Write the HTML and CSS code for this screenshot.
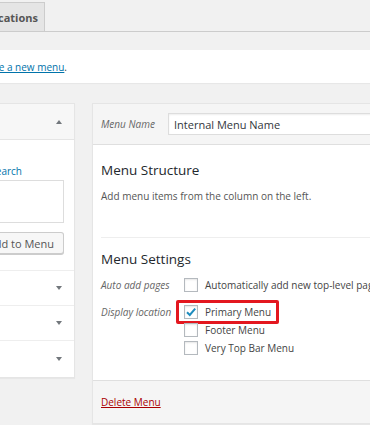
FILE: index.html
```html
<!DOCTYPE html>
<html lang="en">
<head>
<meta charset="utf-8">
<title>Menus</title>
<link rel="stylesheet" href="styles.css">
</head>
<body>
<div class="tabs">
  <div class="tab"><span>Manage Locations</span></div>
</div>

<div class="notice">
  <div class="clip notice-clip"><span>Edit your menu below, or <a href="#">create a new menu</a>.</span></div>
</div>

<div class="columns">
  <div class="side">
    <div class="side-head"><span class="arrow up"></span></div>
    <div class="side-body">
      <div class="clip tab-links"><span>Most Recent | View All | <a href="#" class="plain">Search</a></span></div>
      <div class="listbox"></div>
      <div class="clip btn"><span>Add to Menu</span></div>
    </div>
    <div class="acc"><span class="arrow down"></span></div>
    <div class="acc"><span class="arrow down"></span></div>
    <div class="acc last"><span class="arrow down"></span></div>
  </div>

  <div class="main">
    <div class="main-head">
      <span class="field-label">Menu Name</span>
      <div class="input">Internal Menu Name</div>
    </div>
    <div class="main-body">
      <h3 class="title">Menu Structure</h3>
      <p class="desc">Add menu items from the column on the left.</p>
      <div class="divider"></div>
      <h3 class="title settings-title">Menu Settings</h3>
      <div class="setting">
        <div class="setting-label">Auto add pages</div>
        <div class="opts">
          <div class="opt"><span class="cb"></span>Automatically add new top-level pages to this menu</div>
        </div>
      </div>
      <div class="setting locations">
        <div class="setting-label">Display location</div>
        <div class="opts">
          <div class="opt highlight"><span class="cb checked"><svg viewBox="0 0 14 14" width="14" height="14"><path d="M3 7.2 L5.8 10 L11.2 3.6" fill="none" stroke="#1e8cbe" stroke-width="2"/></svg></span>Primary Menu</div>
          <div class="opt"><span class="cb"></span>Footer Menu</div>
          <div class="opt"><span class="cb"></span>Very Top Bar Menu</div>
        </div>
      </div>
    </div>
    <div class="main-foot"><a href="#" class="delete">Delete Menu</a></div>
  </div>
</div>
</body>
</html>
```

FILE: styles.css
```css
html, body {
  margin: 0;
  padding: 0;
}
body {
  background: #f1f1f1;
  font-family: "Open Sans", "Noto Sans", sans-serif;
  font-size: 10px;
  color: #444;
  overflow: hidden;
  width: 370px;
  height: 425px;
}
a {
  color: #0073aa;
  text-decoration: underline;
}
a.plain {
  text-decoration: none;
}
.clip {
  display: flex;
  justify-content: flex-end;
  overflow: hidden;
  white-space: nowrap;
}

/* top tab */
.tabs {
  padding-top: 2px;
  height: 29px;
  border-bottom: 1px solid #ccc;
  display: flex;
}
.tab {
  width: 45px;
  height: 29px;
  box-sizing: border-box;
  background: #e5e5e5;
  border: 1px solid #ccc;
  border-bottom: none;
  border-left: none;
  display: flex;
  justify-content: flex-end;
  align-items: center;
  overflow: hidden;
  white-space: nowrap;
  padding-right: 6px;
  font-size: 11px;
  font-weight: 700;
  color: #555;
}

/* notice */
.notice {
  margin-top: 18px;
  height: 33px;
  background: #fff;
  display: flex;
  align-items: center;
  box-shadow: 0 1px 1px rgba(0,0,0,0.04);
}
.notice-clip {
  width: 67px;
  color: #444;
}

/* columns */
.columns {
  margin-top: 20px;
  display: flex;
  gap: 17px;
  align-items: flex-start;
}
.side {
  width: 75px;
  flex: none;
  background: #fff;
  border: 1px solid #e5e5e5;
  border-left: none;
  box-sizing: border-box;
  box-shadow: 0 1px 1px rgba(0,0,0,0.04);
}
.side-head {
  height: 35px;
  background: #f7f7f7;
  border-bottom: 1px solid #e5e5e5;
  display: flex;
  justify-content: flex-end;
  align-items: center;
  padding-right: 12px;
}
.arrow {
  width: 0;
  height: 0;
  border-left: 3.5px solid transparent;
  border-right: 3.5px solid transparent;
}
.arrow.up {
  border-bottom: 4px solid #72777c;
}
.arrow.down {
  border-top: 4px solid #72777c;
}
.side-body {
  padding: 24px 10px 16px 0;
}
.tab-links {
  width: 22px;
  line-height: 14px;
  color: #444;
}
.listbox {
  margin-top: 2px;
  height: 43px;
  box-sizing: border-box;
  border: 1px solid #ddd;
  border-left: none;
  background: #fff;
}
.btn {
  margin-top: 9px;
  height: 22px;
  box-sizing: border-box;
  border: 1px solid #ccc;
  border-left: none;
  border-radius: 0 3px 3px 0;
  background: #f7f7f7;
  box-shadow: 0 1px 0 #ccc;
  align-items: center;
  padding-right: 9px;
  font-size: 11px;
  color: #555;
}
.acc {
  height: 34px;
  border-top: 1px solid #eee;
  display: flex;
  justify-content: flex-end;
  align-items: center;
  padding-right: 12px;
}
.acc.last {
  height: 36px;
}

/* main panel */
.main {
  width: 300px;
  flex: none;
  background: #fff;
  border: 1px solid #e5e5e5;
  border-right: none;
  box-shadow: 0 1px 1px rgba(0,0,0,0.04);
}
.main-head {
  background: #f5f5f5;
  border-bottom: 1px solid #dfdfdf;
  padding: 9px 0 9px 8px;
  display: flex;
  align-items: center;
}
.field-label {
  width: 67px;
  font-style: italic;
  color: #666;
}
.input {
  flex: 1;
  height: 22px;
  box-sizing: border-box;
  border: 1px solid #ddd;
  border-right: none;
  background: #fff;
  display: flex;
  align-items: center;
  padding-left: 5px;
  font-size: 11px;
  color: #32373c;
  box-shadow: inset 0 1px 2px rgba(0,0,0,0.07);
}
.main-body {
  padding: 0 0 25px 8px;
}
.title {
  margin: 16px 0 0;
  font-size: 13.5px;
  line-height: 18px;
  font-weight: 400;
  color: #23282d;
}
.desc {
  margin: 10px 0 0;
  line-height: 14px;
  color: #555;
}
.divider {
  margin-top: 34px;
  height: 1px;
  background: #eee;
}
.settings-title {
  margin-top: 12px;
}
.setting {
  display: flex;
  margin-top: 10px;
  white-space: nowrap;
}
.locations {
  margin-top: 13px;
}
.setting-label {
  width: 83px;
  flex: none;
  font-style: italic;
  color: #666;
  line-height: 14px;
}
.opts {
  display: flex;
  flex-direction: column;
  align-items: flex-start;
  gap: 4px;
}
.opt {
  display: flex;
  align-items: center;
  gap: 7px;
  line-height: 14px;
  color: #444;
  position: relative;
}
.cb {
  width: 14px;
  height: 14px;
  box-sizing: border-box;
  border: 1px solid #b4b9be;
  background: #fff;
  box-shadow: inset 0 1px 2px rgba(0,0,0,0.1);
  display: flex;
  flex: none;
}
.cb svg {
  margin: -1px;
}
.highlight::after {
  content: "";
  position: absolute;
  left: -8px;
  right: -8px;
  top: -5px;
  bottom: -5px;
  border: 3px solid #e3171f;
  border-radius: 2px;
}
.main-foot {
  background: #f5f5f5;
  border-top: 1px solid #dfdfdf;
  height: 42px;
  display: flex;
  align-items: center;
  padding-left: 8px;
}
.delete {
  color: #a00;
}
```
